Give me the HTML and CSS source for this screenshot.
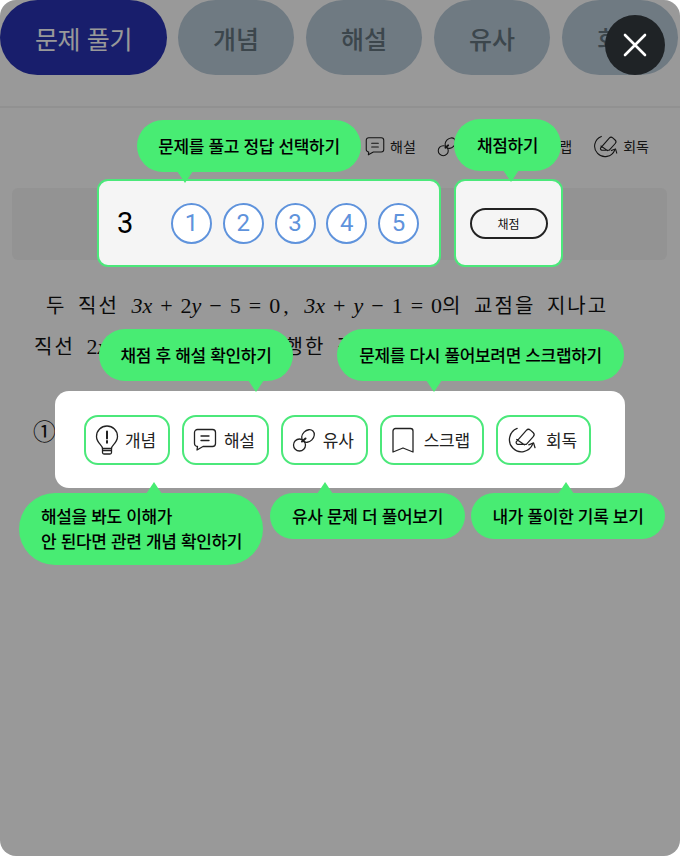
FILE: index.html
```html
<!DOCTYPE html>
<html lang="ko">
<head>
  <meta charset="UTF-8">
  <meta name="viewport" content="width=device-width, initial-scale=1.0">
  <title>문제 풀기 도움말</title>
  <link rel="stylesheet" href="styles.css">
</head>
<body>
  <svg class="icon-defs" aria-hidden="true">
    <symbol id="i-bulb" viewBox="0 0 24 30">
      <path d="M7.5 23.5C7.5 20 1.5 18 1.5 11.5a10.5 10.5 0 0 1 21 0c0 6.500-6 8.500-6 12z" />
      <path d="M7.500 23.500v4a1.500 1.500 0 0 0 1.500 1.500h6a1.500 1.500 0 0 0 1.500-1.500v-4M7.500 25.500h9" />
      <path class="heavy" d="M12 6.500v7M12 16v1.800" />
    </symbol>
    <symbol id="i-comment" viewBox="0 0 24 24">
      <path d="M4.500 1.500h15a3 3 0 0 1 3 3v11a3 3 0 0 1-3 3H10l-6 3.500 .5-3.500a3 3 0 0 1-3-3v-11a3 3 0 0 1 3-3z" />
      <path d="M8 8h8M8 12.500h8" />
    </symbol>
    <symbol id="i-link" viewBox="0 0 24 24">
      <ellipse cx="16" cy="8" rx="7" ry="5.500" transform="rotate(-45 16 8)" />
      <circle cx="7.500" cy="17" r="6" />
      <path class="heavy" d="M10 13.500l3.500-3" />
    </symbol>
    <symbol id="i-mark" viewBox="0 0 24 26">
      <path d="M2 4a2.500 2.500 0 0 1 2.500-2.500h15A2.500 2.500 0 0 1 22 4v21l-10-4-10 4z" />
    </symbol>
    <symbol id="i-review" viewBox="0 0 30 28">
      <path d="M10 2.500A12.500 12.500 0 1 0 26 19" />
      <path d="M9 16.500 19.500 4.500a3 3 0 0 1 4.200-.2l2.800 2.500a3 3 0 0 1 .2 4.200L19.500 19H10.500a2 2 0 0 1-1.500-2.500zM9.500 14l8 5.500" />
      <path d="M22 19.500l5-2 1.500 5" />
    </symbol>
  </svg>

  <div class="screen">
    <nav class="tabs">
      <span class="tab tab-active">문제 풀기</span>
      <span class="tab">개념</span>
      <span class="tab">해설</span>
      <span class="tab">유사</span>
      <span class="tab">회독</span>
    </nav>

    <div class="toolbar">
      <span class="tool"><svg class="tool-icon"><use href="#i-comment"/></svg>해설</span>
      <span class="tool"><svg class="tool-icon"><use href="#i-link"/></svg>유사</span>
      <span class="tool"><svg class="tool-icon"><use href="#i-mark"/></svg>스크랩</span>
      <span class="tool"><svg class="tool-icon tool-icon-review"><use href="#i-review"/></svg>회독</span>
    </div>

    <div class="answer-strip"></div>

    <div class="question">
      <p class="line line-first">두 직선 <span class="math math-lead"><i>3x</i><span class="op">+</span>2<i>y</i><span class="op">−</span>5<span class="op">=</span>0<span class="comma">,</span></span> <span class="math"><i>3x</i><span class="op">+</span><i>y</i><span class="op">−</span>1<span class="op">=</span>0</span>의 교점을 지나고</p>
      <p class="line">직선 <span class="math">2<i>x</i><span class="op">−</span><i>y</i><span class="op">+</span>3<span class="op">=</span>0</span>에 <span class="word-gap">평행한</span> 직선의</p>
      <p class="choice">①</p>
    </div>

    <div class="dim"></div>

    <button class="close" aria-label="닫기">
      <svg viewBox="0 0 24 24"><path d="M2 2l20 20M22 2 2 22" /></svg>
    </button>

    <div class="card card-answer">
      <span class="answer-no">3</span>
      <div class="choices">
        <span class="num">1</span>
        <span class="num">2</span>
        <span class="num">3</span>
        <span class="num">4</span>
        <span class="num">5</span>
      </div>
    </div>

    <div class="card card-grade">
      <span class="grade-btn">채점</span>
    </div>

    <div class="panel">
      <span class="pill"><svg class="pill-icon icon-bulb"><use href="#i-bulb"/></svg>개념</span>
      <span class="pill"><svg class="pill-icon"><use href="#i-comment"/></svg>해설</span>
      <span class="pill"><svg class="pill-icon"><use href="#i-link"/></svg>유사</span>
      <span class="pill"><svg class="pill-icon icon-mark"><use href="#i-mark"/></svg>스크랩</span>
      <span class="pill"><svg class="pill-icon icon-review"><use href="#i-review"/></svg>회독</span>
    </div>

    <div class="bubble tail-down b-solve">문제를 풀고 정답 선택하기</div>
    <div class="bubble tail-down b-grade">채점하기</div>
    <div class="bubble tail-down b-check">채점 후 해설 확인하기</div>
    <div class="bubble tail-down b-scrap">문제를 다시 풀어보려면 스크랩하기</div>
    <div class="bubble tail-up b-concept">해설을 봐도 이해가<br>안 된다면 관련 개념 확인하기</div>
    <div class="bubble tail-up b-similar">유사 문제 더 풀어보기</div>
    <div class="bubble tail-up b-review">내가 풀이한 기록 보기</div>
  </div>
</body>
</html>
```

FILE: styles.css
```css
* {
  box-sizing: border-box;
}

body {
  margin: 0;
  background-color: #fff;
  font-family: "Noto Sans CJK KR", "Noto Sans", sans-serif;
  color: #111;
}

.icon-defs {
  position: absolute;
  width: 0;
  height: 0;
}

symbol path,
symbol circle,
symbol ellipse {
  fill: none;
  stroke: currentColor;
  stroke-width: 1.3;
  stroke-linecap: round;
  stroke-linejoin: round;
}

symbol .heavy {
  stroke-width: 2;
}

.screen {
  position: relative;
  width: 680px;
  height: 856px;
  overflow: hidden;
  border-radius: 16px;
  background-color: #fff;
}

/* tabs */
.tabs {
  display: flex;
  gap: 12px;
  height: 108px;
  border-bottom: 2px solid #f2f2f2;
}

.tab {
  display: flex;
  align-items: center;
  justify-content: center;
  flex: 0 0 116px;
  height: 75px;
  border-radius: 38px;
  background-color: #b9cbd9;
  color: #64757f;
  font-size: 25px;
  font-weight: 500;
}

.tab-active {
  flex-basis: 167px;
  margin-right: -1px;
  background-color: #2832b4;
  color: #fff;
  font-weight: 400;
  letter-spacing: -0.4px;
}

/* toolbar */
.toolbar {
  display: flex;
  justify-content: flex-end;
  gap: 21px;
  margin-top: 25px;
  padding-right: 31px;
}

.tool {
  display: flex;
  align-items: center;
  gap: 5px;
  height: 26px;
  font-size: 14px;
  color: #222;
}

.tool-icon {
  width: 20px;
  height: 21px;
}

.tool-icon-review {
  width: 25px;
  height: 24px;
}

/* empty answer row */
.answer-strip {
  height: 72px;
  margin: 29px 13px 0 12px;
  border-radius: 6px;
  background-color: #f5f5f5;
}

/* question text */
.question {
  padding: 0 34px;
  font-size: 20px;
}

.line {
  margin: 0;
  height: 41px;
  line-height: 41px;
  white-space: nowrap;
  letter-spacing: 2px;
  word-spacing: 4px;
}

.line-first {
  margin-top: 24px;
  padding-left: 12px;
}

.math {
  font-family: "Liberation Serif", serif;
  font-size: 22px;
  letter-spacing: 0;
}

.math-lead {
  margin-left: 1px;
}

.op {
  margin: 0 8px;
}

.comma {
  margin: 0 4px 0 3px;
}

.word-gap {
  margin-left: 8px;
}

.choice {
  margin: 49px 0 0 -1px;
  font-size: 23px;
  line-height: 30px;
}

.dim {
  position: absolute;
  inset: 0;
  background-color: rgba(0, 0, 0, 0.4);
}

.close {
  position: absolute;
  top: 15px;
  left: 605px;
  display: flex;
  align-items: center;
  justify-content: center;
  width: 60px;
  height: 60px;
  padding: 0;
  border: 0;
  border-radius: 50%;
  background-color: #1f2326;
}

.close svg {
  width: 24px;
  height: 24px;
  fill: none;
  stroke: #fff;
  stroke-width: 2.6;
  stroke-linecap: round;
}

/* highlighted cards */
.card {
  position: absolute;
  top: 179px;
  height: 88px;
  display: flex;
  align-items: center;
  border: 2px solid #4be87a;
  border-radius: 11px;
  background-color: #f5f5f5;
}

.card-answer {
  left: 97px;
  width: 344px;
  padding-left: 18px;
}

.answer-no {
  width: 54px;
  font-family: Roboto, sans-serif;
  font-size: 29px;
  color: #000;
}

.choices {
  display: flex;
  gap: 10.75px;
}

.num {
  display: flex;
  align-items: center;
  justify-content: center;
  width: 41px;
  height: 41px;
  border: 2px solid #5f93dc;
  border-radius: 50%;
  background-color: #fff;
  color: #5f93dc;
  font-family: Roboto, sans-serif;
  font-size: 24px;
}

.card-grade {
  left: 454px;
  width: 109px;
  justify-content: center;
}

.grade-btn {
  width: 78px;
  height: 31px;
  border: 2px solid #222;
  border-radius: 16px;
  font-size: 12px;
  line-height: 27px;
  text-align: center;
  background-color: #f5f5f5;
}

/* white panel with the buttons */
.panel {
  position: absolute;
  top: 391px;
  left: 55px;
  width: 570px;
  height: 97px;
  display: flex;
  align-items: center;
  gap: 12px;
  padding-left: 29px;
  border-radius: 14px;
  background-color: #fff;
}

.pill {
  display: flex;
  align-items: center;
  gap: 7px;
  height: 50px;
  padding: 0 12px 0 9px;
  border: 2px solid #4be87a;
  border-radius: 14px;
  font-size: 17px;
  letter-spacing: -0.2px;
  color: #222;
}

.pill-icon {
  width: 24px;
  height: 24px;
}

.icon-bulb {
  height: 30px;
  margin-right: -1px;
}

.icon-mark {
  height: 26px;
  margin: 0 2px 0 0;
}

.icon-review {
  width: 30px;
  height: 27px;
  margin: 0 2px 0 0;
}

/* coach bubbles */
.bubble {
  position: absolute;
  height: 52px;
  padding: 0 22px;
  border-radius: 26px;
  background-color: #48ec73;
  color: #000;
  font-size: 17px;
  font-weight: 500;
  letter-spacing: -0.35px;
  line-height: 51px;
  white-space: nowrap;
  text-align: center;
}

.bubble::after {
  content: "";
  position: absolute;
  left: var(--tail);
  border-left: 8px solid transparent;
  border-right: 8px solid transparent;
}

.tail-down::after {
  bottom: -11px;
  border-top: 12px solid #48ec73;
}

.tail-up::after {
  top: -11px;
  border-bottom: 12px solid #48ec73;
}

.b-solve {
  top: 120px;
  left: 137px;
  width: 224px;
  padding: 0;
  --tail: 40px;
}

.b-grade {
  top: 119px;
  left: 454px;
  width: 107px;
  padding: 0;
  --tail: 49px;
}

.b-check {
  top: 329px;
  left: 99px;
  width: 194px;
  padding: 0;
  --tail: 149px;
}

.b-scrap {
  top: 329px;
  left: 337px;
  width: 287px;
  padding: 0;
  --tail: 89px;
}

.b-concept {
  top: 493px;
  left: 19px;
  width: 244px;
  height: 72px;
  border-radius: 36px;
  padding: 10px 0 0 22px;
  line-height: 25px;
  text-align: left;
  --tail: 127px;
}

.b-similar {
  top: 493px;
  left: 270px;
  width: 195px;
  height: 46px;
  padding: 0;
  line-height: 45px;
  --tail: 47px;
}

.b-review {
  top: 493px;
  left: 471px;
  width: 194px;
  height: 46px;
  padding: 0;
  line-height: 45px;
  --tail: 87px;
}
```
